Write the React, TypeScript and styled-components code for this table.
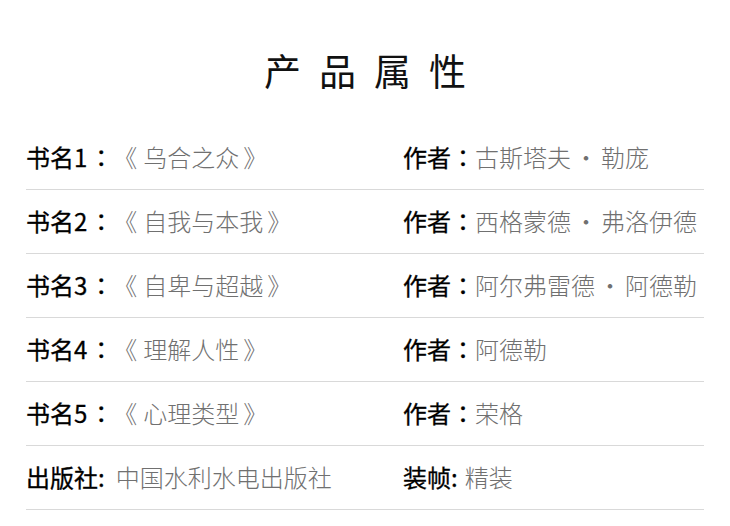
import React from "react";
import styled, { createGlobalStyle } from "styled-components";

const Global = createGlobalStyle`
  html, body { margin: 0; padding: 0; background: #fff; }
  body {
    font-family: "Noto Sans CJK SC", "Noto Sans", sans-serif;
    text-spacing-trim: space-all;
  }
`;

const Page = styled.div`
  width: 730px;
  height: 526px;
  box-sizing: border-box;
  padding: 0 26px;
  background: #fff;
`;

const Title = styled.h1`
  margin: 0;
  height: 126px;
  box-sizing: border-box;
  padding-top: 14px;
  display: flex;
  align-items: center;
  justify-content: center;
  font-size: 37px;
  font-weight: 400;
  letter-spacing: 18px;
  text-indent: 18px;
  color: #111;
  line-height: 1;
`;

const Row = styled.div`
  display: grid;
  grid-template-columns: 377px 1fr;
  align-items: center;
  height: 64px;
  box-sizing: border-box;
  border-bottom: 1px solid #d9d9d9;
`;

const Cell = styled.div`
  font-size: 24px;
  line-height: 1;
  white-space: nowrap;
  color: #707070;
  font-weight: 300;
  padding-bottom: 2px;
  text-spacing-trim: space-all;
`;

const Label = styled.span<{ $gap?: number }>`
  color: #000;
  font-weight: 400;
  -webkit-text-stroke: 0.3px #000;
  margin-right: ${(p) => p.$gap ?? 0}px;
`;

const Colon = styled.span<{ $shift?: number }>`
  font-family: "Noto Sans CJK JP", "Noto Sans CJK SC", sans-serif;
  margin-left: ${(p) => p.$shift ?? 0}px;
`;

const Bracket = styled.span<{ $side: "open" | "close" }>`
  font-family: "Noto Sans CJK TC", "Noto Sans CJK SC", sans-serif;
  ${(p) => (p.$side === "open" ? "margin-right: 6px;" : "margin-left: 4px;")}
`;

const Dot = styled.span`
  font-family: "Noto Sans CJK JP", "Noto Sans CJK SC", sans-serif;
  margin: 0 3px;
`;

type Item = {
  l1: string;
  v1: string;
  book?: boolean;
  l2: string;
  v2: string[];
  half?: boolean;
};

const items: Item[] = [
  { l1: "书名1", v1: "乌合之众", book: true, l2: "作者", v2: ["古斯塔夫", "勒庞"] },
  { l1: "书名2", v1: "自我与本我", book: true, l2: "作者", v2: ["西格蒙德", "弗洛伊德"] },
  { l1: "书名3", v1: "自卑与超越", book: true, l2: "作者", v2: ["阿尔弗雷德", "阿德勒"] },
  { l1: "书名4", v1: "理解人性", book: true, l2: "作者", v2: ["阿德勒"] },
  { l1: "书名5", v1: "心理类型", book: true, l2: "作者", v2: ["荣格"] },
  { l1: "出版社", v1: "中国水利水电出版社", l2: "装帧", v2: ["精装"], half: true },
];

function LabelText({
  text,
  half,
  gap,
  shift,
}: {
  text: string;
  half?: boolean;
  gap?: number;
  shift?: number;
}) {
  if (half) return <Label $gap={gap}>{text}:</Label>;
  return (
    <Label>
      {text}
      <Colon $shift={shift}>：</Colon>
    </Label>
  );
}

export default function App() {
  return (
    <Page>
      <Global />
      <Title>产品属性</Title>
      {items.map((it, i) => (
        <Row key={i}>
          <Cell>
            <LabelText text={it.l1} half={it.half} gap={11} shift={2} />
            {it.book ? (
              <>
                <Bracket $side="open">《</Bracket>
                {it.v1}
                <Bracket $side="close">》</Bracket>
              </>
            ) : (
              it.v1
            )}
          </Cell>
          <Cell>
            <LabelText text={it.l2} half={it.half} gap={7} />
            {it.v2.map((part, j) => (
              <React.Fragment key={j}>
                {j > 0 && <Dot>・</Dot>}
                {part}
              </React.Fragment>
            ))}
          </Cell>
        </Row>
      ))}
    </Page>
  );
}
